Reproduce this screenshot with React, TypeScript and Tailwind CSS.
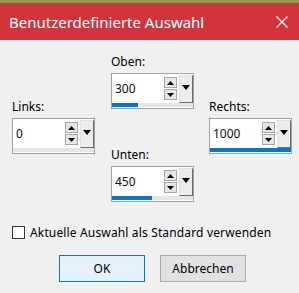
import React from 'react'

// spin field like the old win32 up/down + dropdown control
function Spin({ value, fill }: { value: string; fill: number }) {
  return (
    <div className="w-[83px] h-[36px] border border-[#a2a2a2] bg-white flex flex-col">
      <div className="h-[29px] flex">
        <div className="flex-1 pl-[3px] pt-[7px] text-[12px] leading-[16px] text-[#101010]">{value}</div>
        <div className="w-[13px] mt-[3px] flex flex-col gap-[1px]">
          <div className="h-[11px] border border-[#a8a8a8] bg-[#e6e6e6] flex items-center justify-center">
            <svg width="7" height="4" viewBox="0 0 7 4"><path d="M3.5 0L7 4H0z" fill="#000" /></svg>
          </div>
          <div className="h-[11px] border border-[#a8a8a8] bg-[#e6e6e6] flex items-center justify-center">
            <svg width="7" height="4" viewBox="0 0 7 4"><path d="M0 0H7L3.5 4z" fill="#000" /></svg>
          </div>
        </div>
        <div className="w-[14px] ml-[2px] mt-[1px] h-[28px] bg-[#ececec] border-l border-t border-[#e0e0e0] border-r border-r-[#6a6a6a] border-b border-b-[#6a6a6a] flex justify-center pt-[9px]">
          <svg width="8" height="5" viewBox="0 0 8 5"><path d="M0 0H8L4 5z" fill="#000" /></svg>
        </div>
      </div>
      <div className="h-[4px] bg-[#e6e6e6]">
        <div className="h-full bg-[#0078d7]" style={{ width: fill }} />
      </div>
    </div>
  )
}

function Field({ label, value, fill }: { label: string; value: string; fill: number }) {
  return (
    <div className="flex flex-col">
      <div className="text-[12px] leading-[16px] text-black">{label}</div>
      <div className="mt-[3px]">
        <Spin value={value} fill={fill} />
      </div>
    </div>
  )
}

export default function App() {
  return (
    <div className="w-[299px] h-[293px] bg-[#f0f0f0] overflow-hidden font-['Noto_Sans',sans-serif]">
      <div className="h-[3px] bg-[#8e9c55]" />
      <div className="h-[37px] bg-[#d3343c] flex items-center justify-between pl-[9px] pr-[11px] text-white">
        <span className="text-[15px] leading-[20px]">Benutzerdefinierte Auswahl</span>
        <svg width="12" height="12" viewBox="0 0 12 12">
          <path d="M0.5 0.5L11.5 11.5M11.5 0.5L0.5 11.5" stroke="#fff" strokeWidth="1.1" />
        </svg>
      </div>

      <div className="flex pl-[12px] pt-[14px]">
        <div className="pt-[45px]">
          <Field label="Links:" value="0" fill={0} />
        </div>
        <div className="ml-[16px] flex flex-col">
          <Field label="Oben:" value="300" fill={26} />
          <div className="mt-[38px]">
            <Field label="Unten:" value="450" fill={40} />
          </div>
        </div>
        <div className="ml-[15px] pt-[45px]">
          <Field label="Rechts:" value="1000" fill={81} />
        </div>
      </div>

      <div className="mt-[24px] pl-[12px] h-[13px] flex items-center">
        <div className="w-[13px] h-[13px] border border-[#333] bg-white" />
        <span className="ml-[5px] text-[12px] leading-[16px] tracking-[0.15px] text-black whitespace-nowrap">Aktuelle Auswahl als Standard verwenden</span>
      </div>

      <div className="mt-[16px] pl-[59px] flex gap-[15px]">
        <button className="w-[86px] h-[27px] bg-[#e5f1fb] border border-[#0078d7] text-[12px] text-black">OK</button>
        <button className="w-[86px] h-[27px] bg-[#e1e1e1] border border-[#adadad] text-[12px] text-black">Abbrechen</button>
      </div>
    </div>
  )
}
